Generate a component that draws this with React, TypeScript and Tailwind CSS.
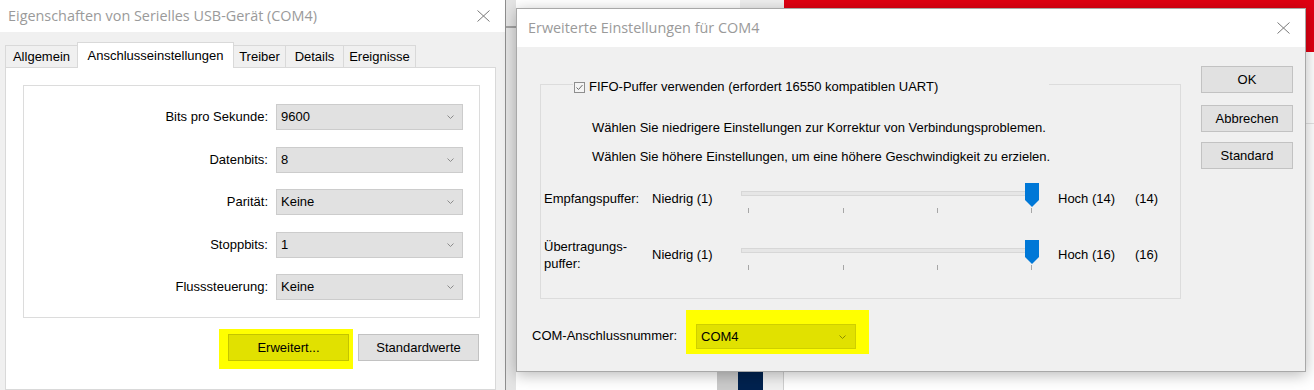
import React from 'react'

const sans = "font-['Liberation_Sans',Arial,sans-serif]"
const title = "font-['Open_Sans',sans-serif] text-[14.4px] text-[#9a9a9a]"

function CloseX() {
  return (
    <svg width="13" height="12" viewBox="0 0 13 12" className="block">
      <path d="M0.5 0.5 L12.5 11.5 M12.5 0.5 L0.5 11.5" stroke="#7a7a7a" strokeWidth="1" fill="none" />
    </svg>
  )
}

function Chevron({ color = '#8c8c8c' }: { color?: string }) {
  return (
    <svg width="7" height="4" viewBox="0 0 7 4" className="block">
      <path d="M0.5 0.5 L3.5 3.5 L6.5 0.5" fill="none" stroke={color} strokeWidth="1" />
    </svg>
  )
}

function Combo({ value }: { value: string }) {
  return (
    <div className="flex h-[26px] w-[187px] items-center justify-between border border-[#cccccc] bg-[#e1e1e1] pl-[4px] pr-[8px] text-[13px] text-black">
      <span>{value}</span>
      <Chevron />
    </div>
  )
}

function WinButton({ children, className = '' }: { children: React.ReactNode; className?: string }) {
  return (
    <div
      className={`flex h-[27px] items-center justify-center border border-[#c2c2c2] bg-[#e1e1e1] text-[13px] text-black ${className}`}
    >
      {children}
    </div>
  )
}

function Slider() {
  return (
    <svg width="298" height="31" viewBox="0 0 298 31" className="block shrink-0">
      <rect x="0.5" y="8.5" width="292" height="4" fill="#e6e6e6" stroke="#d7d7d7" />
      {[7, 102, 196, 290].map((x) => (
        <line key={x} x1={x + 0.5} x2={x + 0.5} y1="25" y2="30" stroke="#a6a6a6" />
      ))}
      <path d="M284 0 H298 V17 L291 24 L284 17 Z" fill="#0078d7" />
    </svg>
  )
}

function Checkbox() {
  return (
    <svg width="11" height="11" viewBox="0 0 11 11" className="block shrink-0">
      <rect x="0.5" y="0.5" width="10" height="10" fill="#f4f4f4" stroke="#8e8e8e" />
      <path d="M2.5 5.5 L4.5 7.5 L8.5 3" fill="none" stroke="#6a6a6a" strokeWidth="1" />
    </svg>
  )
}

const tabs = [
  { name: 'Allgemein', w: 'w-[73px]' },
  { name: 'Anschlusseinstellungen', w: 'w-[157px]', active: true },
  { name: 'Treiber', w: 'w-[53px]' },
  { name: 'Details', w: 'w-[59px]' },
  { name: 'Ereignisse', w: 'w-[73px]' },
]

const settings = [
  ['Bits pro Sekunde:', '9600'],
  ['Datenbits:', '8'],
  ['Parität:', 'Keine'],
  ['Stoppbits:', '1'],
  ['Flusssteuerung:', 'Keine'],
]

function PropertiesDialog() {
  return (
    <div className="absolute left-0 top-0 flex h-[390px] w-[506px] flex-col border-r border-[#8e8e8e] bg-[#f0f0f0]">
      <div className="flex h-[32px] shrink-0 items-center justify-between bg-white pl-[8px] pr-[15px]">
        <span className={title}>Eigenschaften von Serielles USB-Gerät (COM4)</span>
        <CloseX />
      </div>

      <div className="flex flex-1 flex-col pl-[5px] pr-[9px] pt-[10px]">
        {/* tabs */}
        <div className="flex h-[25px] items-end">
          {tabs.map((t) =>
            t.active ? (
              <div
                key={t.name}
                className={`relative z-10 -mb-px -ml-px flex h-[26px] ${t.w} items-start justify-center border border-b-0 border-[#d9d9d9] bg-white pt-[3px] text-[13px] text-black`}
              >
                {t.name}
              </div>
            ) : (
              <div
                key={t.name}
                className={`-ml-px flex h-[22px] ${t.w} items-center justify-center border border-b-0 border-[#d9d9d9] bg-[#f0f0f0] text-[13px] text-black first:ml-0`}
              >
                {t.name}
              </div>
            ),
          )}
        </div>

        {/* tab panel */}
        <div className="flex flex-1 flex-col border border-[#d9d9d9] bg-white pl-[17px] pr-[15px] pt-[17px]">
          <div className="grid grid-cols-[244px_187px] gap-x-[8px] gap-y-[16.5px] border border-[#dcdcdc] pb-[17px] pt-[18px]">
            {settings.map(([label, value]) => (
              <React.Fragment key={label}>
                <div className="flex h-[26px] items-center justify-end text-[13px] text-black">{label}</div>
                <Combo value={value} />
              </React.Fragment>
            ))}
          </div>

          <div className="mt-[11px] flex items-start justify-end pr-[1px]">
            <div className="bg-[#ffff00] pb-[8px] pl-[9px] pr-[4px] pt-[5px]">
              <div className="flex h-[27px] w-[121px] items-center justify-center border border-[#c4c400] bg-[#e1e100] text-[13px] text-black">
                Erweitert...
              </div>
            </div>
            <WinButton className="ml-[5px] mt-[5px] w-[121px]">Standardwerte</WinButton>
          </div>
        </div>
      </div>
    </div>
  )
}

function BufferRow({ label, high, value }: { label: React.ReactNode; high: string; value: string }) {
  return (
    <div className="flex items-center text-[13px] text-black">
      <div className="w-[108px] leading-[17px]">{label}</div>
      <div className="w-[89px]">Niedrig (1)</div>
      <Slider />
      <div className="ml-[19px] w-[77px]">{high}</div>
      <div>{value}</div>
    </div>
  )
}

function AdvancedDialog() {
  return (
    <div className="absolute left-[516px] top-[8px] flex h-[364px] w-[790px] flex-col border border-[#a8a8a8] bg-[#f0f0f0] shadow-[0_3px_14px_rgba(0,0,0,0.28)]">
      <div className="flex h-[38px] shrink-0 items-center justify-between bg-white pl-[11px] pr-[15px]">
        <span className={title}>Erweiterte Einstellungen für COM4</span>
        <CloseX />
      </div>

      <div className="flex flex-1 text-[13px] text-black">
        <div className="flex w-[664px] flex-col pl-[15px] pt-[37px]">
          <div className="relative ml-[8px] flex h-[215px] flex-col border border-[#dcdcdc] pl-[3px] pt-[35px]">
            <div className="absolute left-[32px] top-[-6px] flex h-[16px] w-[476px] items-center gap-[4px] bg-[#f0f0f0] pl-[1px]">
              <Checkbox />
              <span>FIFO-Puffer verwenden (erfordert 16550 kompatiblen UART)</span>
            </div>
            <p className="ml-[48px] leading-[16px]">
              Wählen Sie niedrigere Einstellungen zur Korrektur von Verbindungsproblemen.
            </p>
            <p className="ml-[48px] mt-[13px] leading-[16px]">
              Wählen Sie höhere Einstellungen, um eine höhere Geschwindigkeit zu erzielen.
            </p>
            <div className="mt-[18px]">
              <BufferRow label="Empfangspuffer:" high="Hoch (14)" value="(14)" />
            </div>
            <div className="mt-[24px]">
              <BufferRow
                label={
                  <>
                    Übertragungs-
                    <br />
                    puffer:
                  </>
                }
                high="Hoch (16)"
                value="(16)"
              />
            </div>
          </div>

          <div className="mt-[11px] flex items-start">
            <div className="mt-[18px] w-[154px] leading-[16px]">COM-Anschlussnummer:</div>
            <div className="bg-[#ffff00] pb-[5px] pl-[10px] pr-[13px] pt-[14px]">
              <div className="flex h-[25px] w-[160px] items-center justify-between border border-[#cfcf00] bg-[#e1e100] pl-[4px] pr-[9px]">
                <span>COM4</span>
                <Chevron color="#8c8c00" />
              </div>
            </div>
          </div>
        </div>

        <div className="ml-[20px] flex w-[92px] flex-col pt-[19px]">
          <WinButton>OK</WinButton>
          <WinButton className="mt-[12px]">Abbrechen</WinButton>
          <WinButton className="mt-[10px]">Standard</WinButton>
        </div>
      </div>
    </div>
  )
}

export default function App() {
  return (
    <div className={`relative h-[390px] w-[1314px] overflow-hidden bg-white ${sans}`}>
      {/* desktop behind the dialogs */}
      <div className="absolute left-[506px] top-0 h-[390px] w-[10px] bg-[#e4e4e4]" />
      <div className="absolute left-[506px] top-[26px] h-[2px] w-[10px] bg-[#a3a3a3]" />
      <div className="absolute left-[740px] top-0 h-[8px] w-[44px] bg-[#efefef]" />
      <div className="absolute left-[784px] top-0 h-[52px] w-[530px] bg-[#e00012]" />
      <div className="absolute left-[1306px] top-[123px] h-px w-[8px] bg-[#e3e3e3]" />
      <div className="absolute left-[717px] top-[372px] flex h-[18px]">
        <div className="w-[21px] bg-[#cbcbcb]" />
        <div className="w-[25px] bg-[#00224f]" />
        <div className="w-[21px] border-r border-[#cfcfcf] bg-[#f0f0f0]" />
      </div>

      <PropertiesDialog />
      <AdvancedDialog />
    </div>
  )
}
